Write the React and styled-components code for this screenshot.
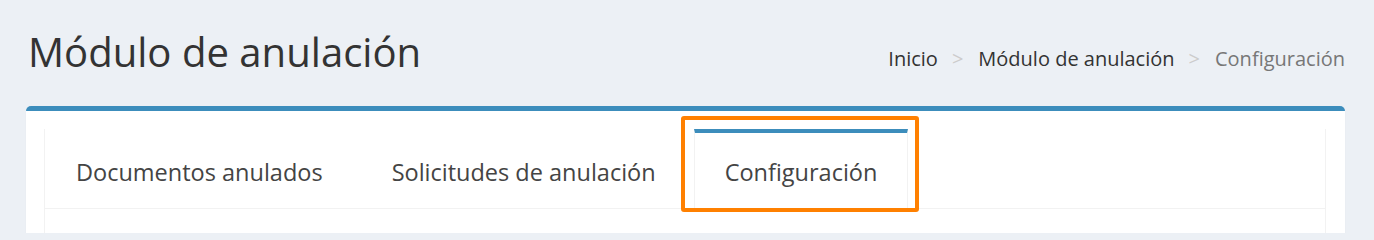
import React from "react";
import styled, { createGlobalStyle } from "styled-components";

const GlobalStyle = createGlobalStyle`
  html, body { margin: 0; padding: 0; height: 100%; overflow: hidden; }
  body {
    background: #ecf0f5;
    font-family: "Open Sans", "Noto Sans", sans-serif;
    color: #333;
    -webkit-font-smoothing: antialiased;
  }
`;

const Page = styled.div`
  height: 233px;
  padding: 30px 29px 0 26px;
  box-sizing: border-box;
  overflow: hidden;
`;

const Header = styled.header`
  display: flex;
  align-items: baseline;
  justify-content: space-between;
  margin-bottom: 32px;
`;

const Title = styled.h1`
  margin: 0 0 0 2px;
  font-size: 40.1px;
  font-weight: 400;
  line-height: 1.1;
  color: #333;
`;

const Breadcrumb = styled.ol`
  display: flex;
  list-style: none;
  margin: 0;
  padding: 0;
  font-size: 20px;
  line-height: 1.4;
  position: relative;
  top: -1px;
`;

const Crumb = styled.li`
  color: ${(p) => (p.$current ? "#777" : "#333")};
  &:not(:first-child)::before {
    content: ">";
    color: #ccc;
    margin: 0 15px 0 14px;
  }
`;

const Card = styled.section`
  background: #fff;
  border-top: 5px solid #3c8dbc;
  border-radius: 5px 5px 0 0;
  box-shadow: 0 1px 1px rgba(0, 0, 0, 0.08);
  padding: 22px 19px 0 18px;
  height: 200px;
`;

const Panel = styled.div`
  background: #fff;
  border-left: 1px solid #f2f2f2;
  border-right: 1px solid #f2f2f2;
  height: 100%;
`;

const TabList = styled.ul`
  display: flex;
  list-style: none;
  margin: -4px 0 0 0;
  padding: 0;
  border-bottom: 1px solid #f2f2f2;
`;

const Tab = styled.li`
  position: relative;
  margin-right: 7px;
  margin-bottom: ${(p) => (p.$active ? "-1px" : "0")};
  border-top: 4px solid ${(p) => (p.$active ? "#3c8dbc" : "transparent")};
  border-left: 1px solid ${(p) => (p.$active ? "#f2f2f2" : "transparent")};
  border-right: 1px solid ${(p) => (p.$active ? "#f2f2f2" : "transparent")};
  background: ${(p) => (p.$active ? "#fff" : "transparent")};
  padding: 23px 30px ${(p) => (p.$active ? "21px" : "20px")};
  font-size: 23.5px;
  line-height: 32px;
  color: #444;
  white-space: nowrap;
`;

const Highlight = styled.span`
  position: absolute;
  top: -17px;
  left: -14px;
  width: 238px;
  height: 96px;
  box-sizing: border-box;
  border: 4px solid #ff8000;
  border-radius: 3px;
  pointer-events: none;
`;

export default function App() {
  return (
    <>
      <GlobalStyle />
      <Page>
        <Header>
          <Title>Módulo de anulación</Title>
          <Breadcrumb>
            <Crumb>Inicio</Crumb>
            <Crumb>Módulo de anulación</Crumb>
            <Crumb $current>Configuración</Crumb>
          </Breadcrumb>
        </Header>
        <Card>
          <Panel>
            <TabList>
              <Tab>Documentos anulados</Tab>
              <Tab>Solicitudes de anulación</Tab>
              <Tab $active>
                Configuración
                <Highlight />
              </Tab>
            </TabList>
          </Panel>
        </Card>
      </Page>
    </>
  );
}
